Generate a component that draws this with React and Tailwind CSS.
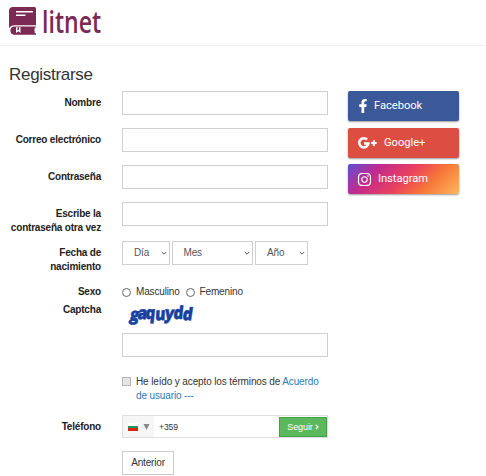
import React from 'react';
import { FaFacebookF, FaInstagram } from 'react-icons/fa';

const inputClass = 'block h-[23.5px] w-[206px] border border-[#cfcfcf] bg-white outline-none';

const Logo = () => (
  <div className="flex items-start gap-[5px]">
    <svg width="28" height="29" viewBox="0 0 28 29" className="mt-[1px]">
      <path d="M4 0H25.500Q27 0 27 1.500V18.200H5Q1.800 18.200 0 21V4Q0 0 4 0Z" fill="#7b2a53" />
      <path d="M7 4.700H24M7 8.300H16.500" stroke="#fff" strokeWidth="1.500" />
      <path d="M5 19.400H27V20.600H25.800Q25 23.500 25.800 26.300H27V27.700H5Q1.400 27.200 1.400 23.500Q1.400 20 5 19.400Z" fill="#7b2a53" />
      <path d="M7 20.300H11.500V26L9.300 24.300L7 26Z" fill="#fff" />
      <path d="M8.500 20.300H10V23.300L9.250 22.800L8.500 23.300Z" fill="#7b2a53" />
    </svg>
    <span className="origin-left scale-x-[0.745] font-['Open_Sans',sans-serif] text-[31px] leading-[30px] font-semibold text-[#7b2a53]">litnet</span>
  </div>
);

const Row = ({ label, className = '', children }) => (
  <div className={`flex ${className}`}>
    <label className="w-[101px] shrink-0 pt-[5px] text-right font-bold tracking-[-0.2px] leading-[14px] text-[#222]">{label}</label>
    <div className="ml-[21px] w-[206px] shrink-0">{children}</div>
  </div>
);

const Select = ({ label, className }) => (
  <button type="button" className={`flex h-[24px] items-center justify-between border border-[#cfcfcf] pr-[2px] pl-[11px] text-[#555] ${className}`}>
    {label}
    <svg width="6" height="5" viewBox="0 0 6 5" fill="none" stroke="#555">
      <path d="M0.800 1L3 3.200L5.200 1" />
    </svg>
  </button>
);

const Radio = ({ label }) => (
  <label className="flex items-center gap-[5px]">
    <span className="size-[9px] rounded-full border border-[#666] bg-white" />
    {label}
  </label>
);

const GooglePlus = () => (
  <svg width="20" height="14" viewBox="0 0 20 14" fill="none" stroke="#fff">
    <path d="M9.100 3.500A4.600 4.600 0 1 0 10.400 7.600H6" strokeWidth="2.500" />
    <path d="M15.900 4.300V9.900M13.100 7.100H18.700" strokeWidth="2" />
  </svg>
);

const captchaLetters = [
  { char: 'g', x: 7, y: 22, turn: 6 },
  { char: 'a', x: 15, y: 21, turn: 2 },
  { char: 'q', x: 23, y: 21, turn: 0 },
  { char: 'u', x: 33, y: 22.5, turn: -3 },
  { char: 'y', x: 42, y: 21, turn: 3 },
  { char: 'd', x: 51, y: 21, turn: 0 },
  { char: 'd', x: 60, y: 22, turn: 3 },
];

const Captcha = () => (
  <svg width="80" height="35" viewBox="0 0 80 35" className="block" fill="#193f9f" stroke="#193f9f" strokeWidth="0.500">
    {captchaLetters.map(({ char, x, y, turn }) => (
      <text
        key={x}
        transform={`translate(${x} ${y}) rotate(${turn}) skewX(-6) scale(0.95 1.1)`}
        className="font-['Open_Sans',sans-serif] text-[16px] font-extrabold tracking-normal"
      >
        {char}
      </text>
    ))}
  </svg>
);

const socialClass = 'flex h-[30px] w-[111px] items-center rounded-[2px] pl-[10px] font-[Roboto,sans-serif] text-[11.2px] tracking-[-0.05px] text-white shadow-[0_1px_2px_rgba(0,0,0,0.4)]';

const App = () => {
  return (
    <div className="h-[476px] w-[486px] overflow-hidden bg-white font-['Liberation_Sans',Arial,sans-serif] text-[10px] tracking-[-0.16px] leading-[14px] text-[#333]">
      <header className="h-[46px] border-b border-[#f0f0f0] pt-[6px] pl-[9px] tracking-normal">
        <Logo />
      </header>

      <h1 className="mt-[19px] ml-[9px] h-[26px] text-[17px] leading-[20px] tracking-[-0.3px] text-[#333]">Registrarse</h1>

      <div className="flex items-start">
        <form className="w-[348px] shrink-0">
          <Row label="Nombre" className="h-[37px]">
            <input className={inputClass} />
          </Row>
          <Row label="Correo electrónico" className="h-[37px]">
            <input className={inputClass} />
          </Row>
          <Row label="Contraseña" className="h-[37px]">
            <input type="password" className={inputClass} />
          </Row>
          <Row label={<>Escribe la<br />contraseña otra vez</>} className="h-[39px]">
            <input type="password" className={inputClass} />
          </Row>
          <Row label={<>Fecha de<br />nacimiento</>} className="h-[39px]">
            <div className="flex gap-[2px]">
              <Select label="Día" className="w-[47.5px]" />
              <Select label="Mes" className="w-[81.5px]" />
              <Select label="Año" className="w-[53px]" />
            </div>
          </Row>
          <Row label="Sexo" className="h-[18px]">
            <div className="flex gap-[6px] pt-[5px]">
              <Radio label="Masculino" />
              <Radio label="Femenino" />
            </div>
          </Row>
          <Row label="Captcha" className="h-[76px]">
            <Captcha />
            <input className={inputClass} />
          </Row>

          <div className="ml-[122px] flex h-[41px] items-start gap-[5px]">
            <span className="mt-[3px] size-[9px] shrink-0 border border-[#b5b5b5] bg-[#e4e4e4]" />
            <p className="pt-[1px] leading-[14px] tracking-[-0.13px]">
              He leído y acepto los términos de <a className="text-[#337ab7]">Acuerdo<br />de usuario ---</a>
            </p>
          </div>

          <Row label="Teléfono" className="h-[36px]">
            <div className="flex h-[23px] border border-[#dedede]">
              <div className="flex w-[31px] items-center gap-[5px] bg-[#f6f6f6] pl-[5px]">
                <div className="h-[8px] w-[10px]">
                  <div className="h-[3px] bg-white" />
                  <div className="h-[2px] bg-[#20966b]" />
                  <div className="h-[3px] bg-[#d62612]" />
                </div>
                <svg width="7" height="6" viewBox="0 0 7 6" fill="#888">
                  <path d="M0.500 0H6.500L3.500 6Z" />
                </svg>
              </div>
              <input defaultValue="+359" className="w-[125px] pl-[5px] text-[8.6px] tracking-[-0.1px] outline-none" />
              <button type="button" className="mt-[0.5px] flex h-[20px] w-[48px] items-center justify-center gap-[2px] border border-[#43a047] bg-[#5cb85c] text-[9px] tracking-[-0.1px] text-white">
                Seguir
                <svg width="4" height="6" viewBox="0 0 4 6" fill="none" stroke="#fff" strokeWidth="1.200">
                  <path d="M0.800 0.800L3 3L0.800 5.200" />
                </svg>
              </button>
            </div>
          </Row>

          <button type="button" className="ml-[122px] block h-[24px] w-[52px] border border-[#ccc] bg-white text-center">Anterior</button>
        </form>

        <div className="flex flex-col gap-[6.5px]">
          <button type="button" className={`${socialClass} bg-[#3b5998]`}>
            <FaFacebookF size={14} className="mr-[4px] -ml-[2px]" />
            Facebook
          </button>
          <button type="button" className={`${socialClass} bg-[#dc4e41]`}>
            <GooglePlus />
            <span className="ml-[6px]">Google+</span>
          </button>
          <button type="button" className={`${socialClass} bg-[linear-gradient(135deg,#5b51d8_0%,#c32a8c_25%,#e9405f_50%,#f77737_72%,#fcb860_100%)]`}>
            <FaInstagram size={15} className="mr-[6px] -ml-[1px]" />
            Instagram
          </button>
        </div>
      </div>
    </div>
  );
};

export default App;
